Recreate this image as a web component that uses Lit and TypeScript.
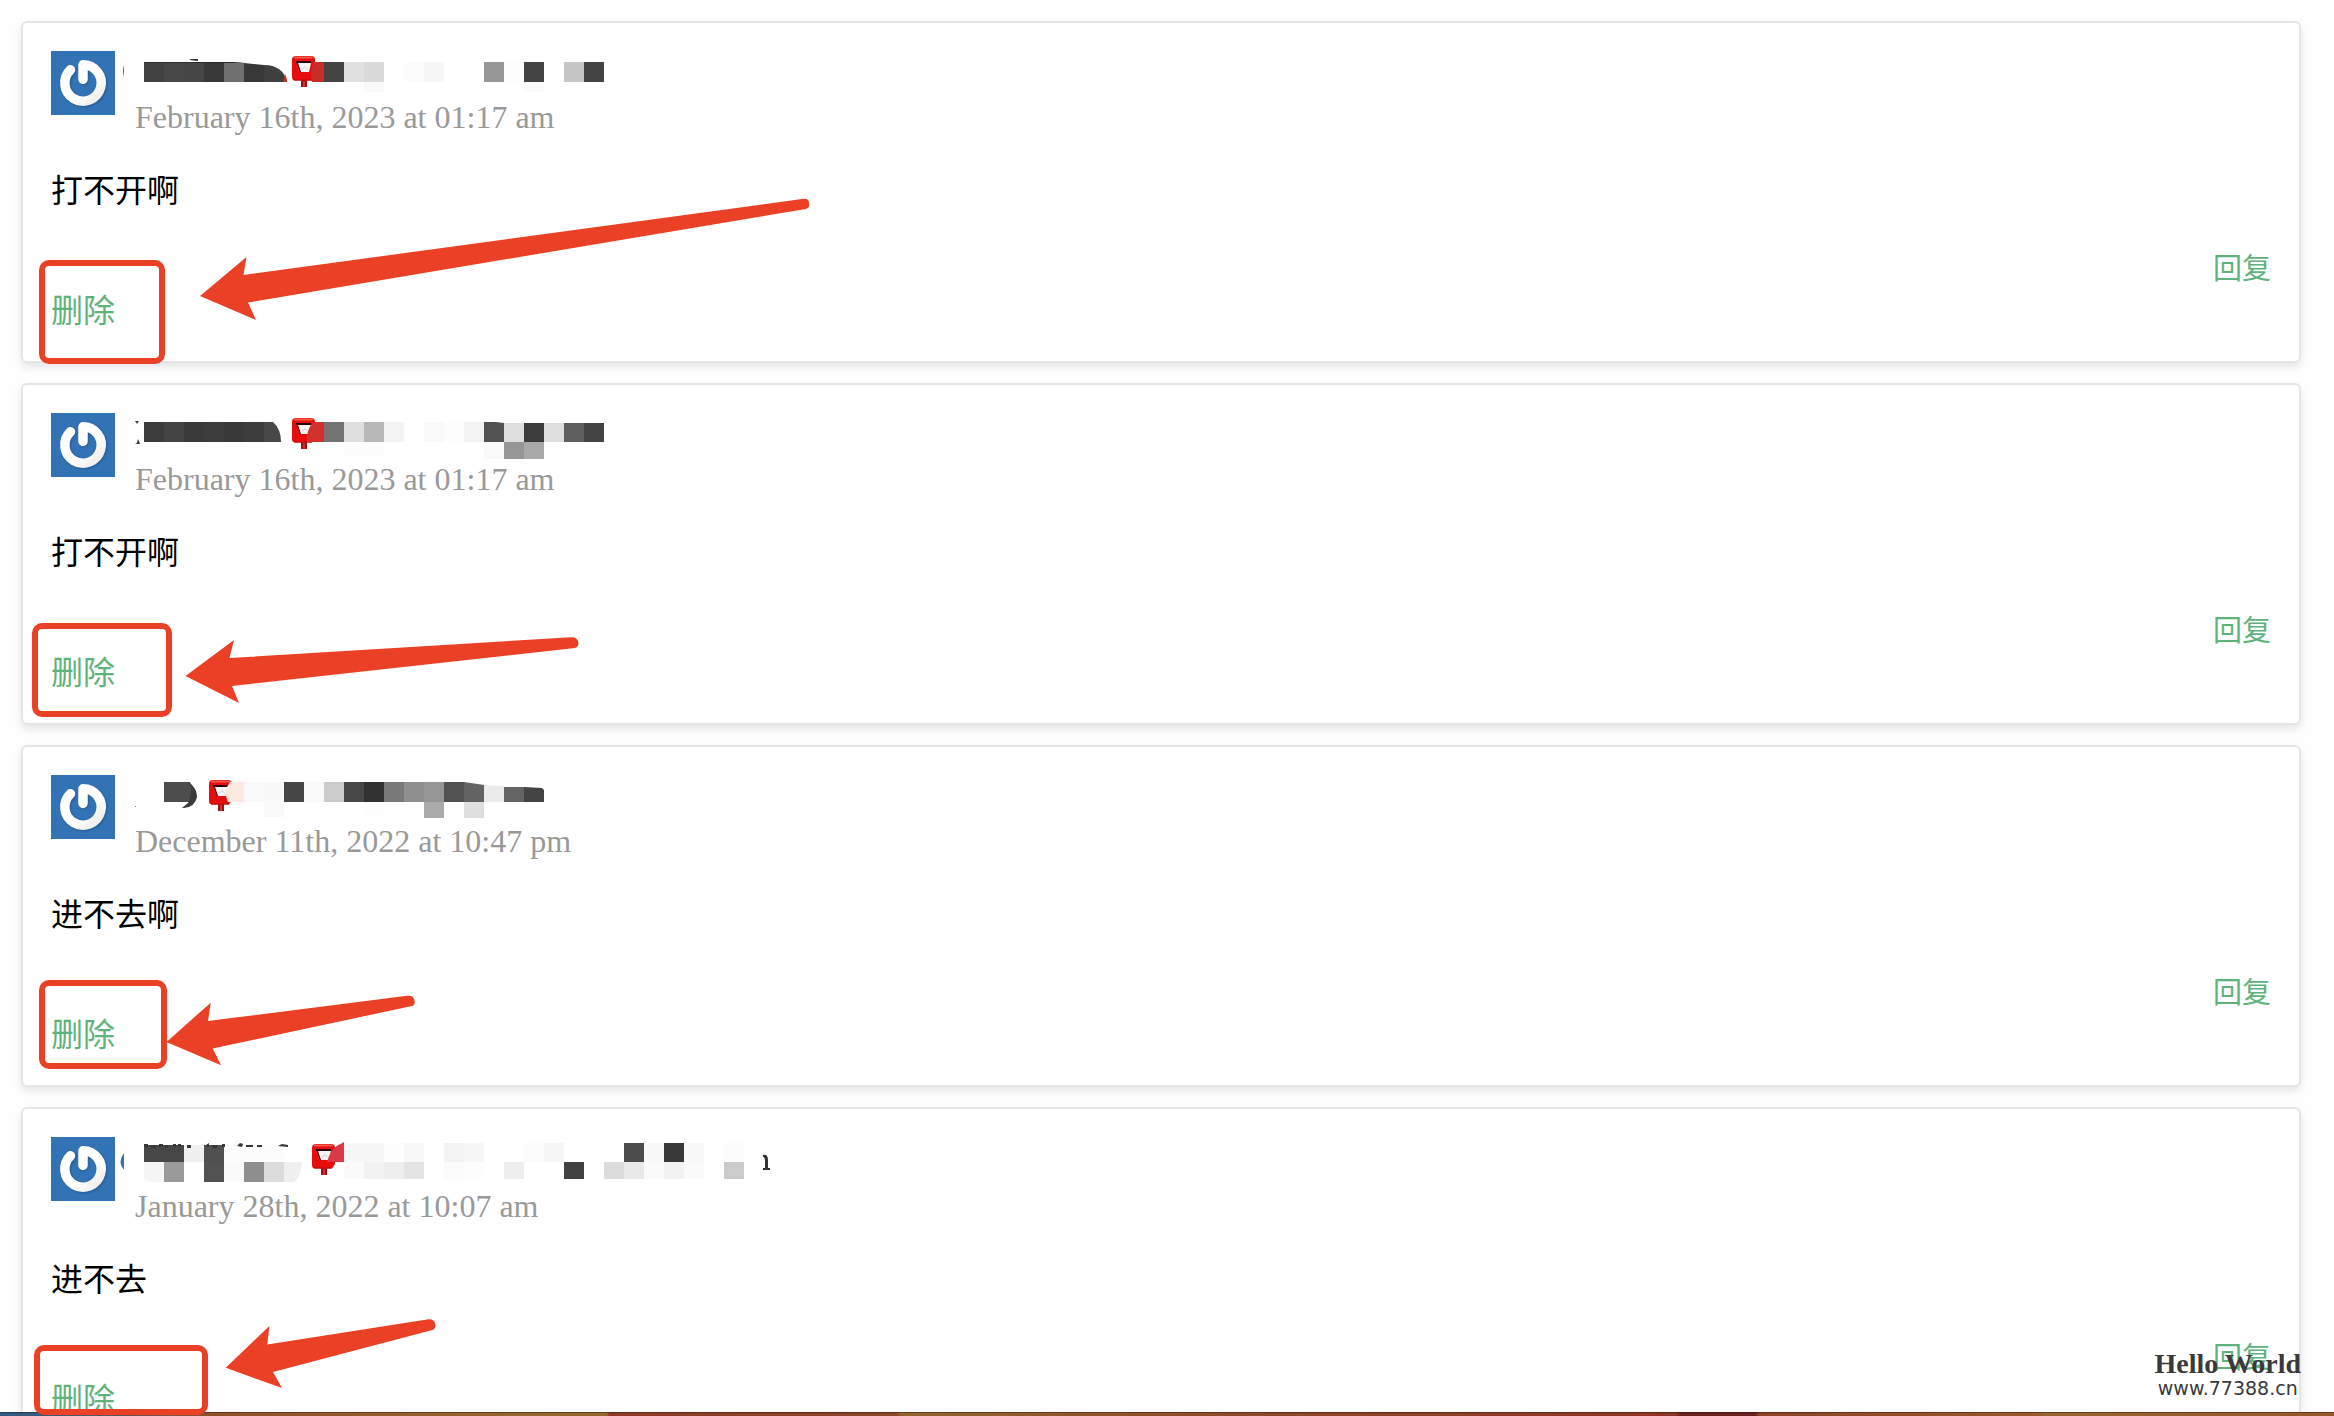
import { LitElement, html, svg, css } from "lit";
import { customElement, property } from "lit/decorators.js";

/** [x, y, width, height, fill] */
type Tile = [number, number, number, number, string];

interface Comment {
  tall?: boolean;
  tiles: Tile[];
  marks: [string, string][];
  mailbox: [number, number];
  overlay: [string, string][];
  date: string;
  body: string;
}

const row = (x: number, y: number, h: number, fills: string): Tile[] =>
  fills
    .split(" ")
    .map((f, i): Tile => [x + i * 20, y, 20, h, f === "-" ? "none" : "#" + f])
    .filter((t) => t[4] !== "none");

const COMMENTS: Comment[] = [
  {
    tiles: [
      ...row(144, 11, 20, "424242 484848 464646 383838"),
      ...row(324, 11, 20, "444444 e0e0e0 dadada - fcfcfc f7f7f7 - fefefe 979797 fdfdfd 444444 - c5c5c5 444444"),
      ...row(364, 31, 10, "fafafa"),
      ...row(524, 31, 10, "fbfbfb"),
    ],
    marks: [
      ["M224 11H232L244 12V31H224Z", "#707070"],
      ["M244 12L264 14V31H244Z", "#383838"],
      ["M264 14Q283 14 287 31H264Z", "#404040"],
      ["M283 31L285 23Q287 27 287 31Z", "#c92d27"],
      ["M144 11H232L246 12L144 12Z", "#2c2c2c"],
      ["M189 9L191 8H198V10Z", "#333"],
      ["M124 14Q122 20 124 26Z", "#3273b5"],
    ],
    mailbox: [292, 5],
    overlay: [["M324 11V31H312Q309 20 314 11Z", "#c92d27"]],
    date: "February 16th, 2023 at 01:17 am",
    body: "打不开啊",
  },
  {
    tiles: [
      ...row(144, 9, 20, "3c3c3c 444444 3a3a3a 3d3d3d 393939 3d3d3d"),
      ...row(324, 9, 20, "737373 dedede b8b8b8 f4f4f4 - f9f9f9 fdfdfd f3f3f3"),
      ...row(504, 10, 19, "dedede 3c3c3c dedede 5f5f5f 444444"),
      ...row(344, 29, 14, "fcfcfc fcfcfc"),
      ...row(484, 29, 17, "f9f9f9 969696 a8a8a8"),
    ],
    marks: [
      ["M264 9H273Q281 16 281 29H264Z", "#484848"],
      ["M484 9H496L504 10V29H484Z", "#525252"],
      ["M135 8H139L137 11Z", "#444"],
      ["M135 31L137 30L138 26L140 31Z", "#333"],
    ],
    mailbox: [292, 5],
    overlay: [["M324 9V29H307Q306 18 313 9Z", "#d3302c"]],
    date: "February 16th, 2023 at 01:17 am",
    body: "打不开啊",
  },
  {
    tiles: [
      ...row(144, 7, 20, "fefefe"),
      ...row(244, 7, 20, "f9f9f9 f8f8f8 464646 fafafa cbcbcb 474747 313131 797979 8f8f8f 969696 525252"),
      ...row(504, 12, 15, "646464"),
      ...row(264, 27, 15, "f9f9f9"),
      ...row(364, 27, 15, "fdfdfd"),
      ...row(424, 27, 16, "ababab"),
      ...row(464, 27, 16, "dfdfdf"),
    ],
    marks: [
      ["M164 7H190Q194 15 195 27H164Z", "#4d4d4d"],
      ["M190 8Q197 14 197 22Q195 32 184 33H182L188 28Q193 18 190 8Z", "#3b3b3b"],
      ["M464 7L484 10V27H464Z", "#636363"],
      ["M484 10L504 11V27H484Z", "#ebebeb"],
      ["M524 12L542 13L544 15V27H524Z", "#444"],
      ["M135 31h1v1h-1z", "#777"],
    ],
    mailbox: [209, 5],
    overlay: [["M244 7V27H228Q223 16 230 7Z", "#ffe8df"]],
    date: "December 11th, 2022 at 10:47 pm",
    body: "进不去啊",
  },
  {
    tall: true,
    tiles: [
      ...row(144, 8, 17, "474747 474747 f0f0f0 505050 fcfcfc fcfcfc fcfcfc"),
      ...row(344, 6, 19, "f7f7f7 f7f7f7 fdfdfd f8f8f8 - f3f3f3 f7f7f7 - - fcfcfc f6f6f6 - - - 4c4c4c f8f8f8 393939 f8f8f8 - fcfcfc"),
      ...row(164, 25, 20, "9a9a9a - 525252 fafafa 8e8e8e dcdcdc"),
      ...row(344, 25, 17, "fafafa f2f2f2 eeeeee e4e4e4 - fcfcfc fdfdfd - eeeeee - - 424242 - dcdcdc e9e9e9 fafafa f2f2f2 fafafa - cbcbcb"),
    ],
    marks: [
      ["M144 25H164V45H152Q144 44 144 40Z", "#f5f5f5"],
      ["M284 25H302Q301 40 294 45H284Z", "#f0f0f0"],
      ["M144 7h4v3h-4zM151 8h5v3h-5zM159 7h4v3h-4zM165 8h3v3h-3zM173 7h3v3h-3zM178 7h3v3h-3zM187 8h4v3h-4zM206 8l3-2v4h-3zM212 8h5v3h-5zM222 7h3v3h-3zM237 9l3-3 3 1-1 3zM246 8h7v2h-7zM257 8h5v2h-5zM278 9l4-2 6 1v2z", "#383838"],
      ["M124 16Q117 25 124 33Z", "#3273b5"],
      ["M763 18Q768 17 768 23V31H770V33H763V31H765V24Q765 20 763 20Z", "#333"],
    ],
    mailbox: [312, 7],
    overlay: [["M344 6V25H327Q330 13 338 8Q341 7 344 5Z", "#d93a45"]],
    date: "January 28th, 2022 at 10:07 am",
    body: "进不去",
  },
];

@customElement("user-avatar")
class UserAvatar extends LitElement {
  static styles = css`
    :host { display: block; flex: none; width: 64px; height: 64px; }
    .picture { display: block; width: 100%; height: 100%; }
  `;
  render() {
    return html`<svg class="picture" viewBox="0 0 64 64" aria-hidden="true">
      <defs>
        <filter id="s" x="-20%" y="-20%" width="140%" height="140%" color-interpolation-filters="sRGB">
          <feGaussianBlur in="SourceAlpha" stdDeviation="1" result="b" />
          <feOffset in="b" dx="1" dy="1" result="o" />
          <feFlood flood-color="#123a66" flood-opacity=".45" />
          <feComposite in2="o" operator="in" result="c" />
          <feMerge><feMergeNode in="c" /><feMergeNode in="SourceGraphic" /></feMerge>
        </filter>
        <linearGradient id="g" x1="0" y1="0" x2="1" y2="1">
          <stop offset=".6" stop-color="#fff" /><stop offset="1" stop-color="#ecebe9" />
        </linearGradient>
      </defs>
      <rect width="64" height="64" fill="#3273b5" />
      <path
        d="M19.500 18.800A18.200 18.200 0 1 0 32 13.800V28.500"
        fill="none" stroke="url(#g)" stroke-width="9.5"
        stroke-linecap="round" stroke-linejoin="round" filter="url(#s)"
      />
    </svg>`;
  }
}

@customElement("comment-card")
class CommentCard extends LitElement {
  @property({ attribute: false }) comment!: Comment;
  static styles = css`
    :host {
      display: block;
      flex: none;
      box-sizing: border-box;
      padding: 28px 28px 32px;
      border: 2px solid #e5e5e5;
      border-radius: 6px;
      background: #fff;
      box-shadow: 0 4px 8px rgba(0, 0, 0, 0.1);
      font-family: Georgia, Gelasio, "Liberation Serif", "Noto Sans CJK SC", serif;
    }
    .head { display: flex; gap: 20px; align-items: flex-start; }
    .meta { display: flex; flex-direction: column; min-width: 0; }
    .name { display: block; width: 640px; height: 46px; overflow: visible; }
    .name.tall { height: 49px; }
    .date {
      font-family: "Liberation Serif", serif;
      font-size: 32px;
      line-height: 40px;
      color: #999;
      white-space: nowrap;
    }
    .body {
      margin: 30px 0 36px;
      font-family: "Noto Sans CJK SC", sans-serif;
      font-size: 32px;
      line-height: 42px;
      color: #000;
    }
    .actions { display: flex; flex-direction: column; align-items: flex-start; }
    .link {
      font-family: "Noto Sans CJK SC", sans-serif;
      font-size: 32px;
      line-height: 42px;
      color: #5fb27a;
      text-decoration: none;
    }
    .reply { align-self: flex-end; font-size: 29px; }
  `;
  render() {
    const c = this.comment;
    const [mx, my] = c.mailbox;
    return html`
      <header class="head">
        <user-avatar></user-avatar>
        <div class="meta">
          <svg class="name ${c.tall ? "tall" : ""}" viewBox="135 0 640 ${c.tall ? 49 : 46}" aria-hidden="true">
            <g shape-rendering="crispEdges">
              ${c.tiles.map(([x, y, w, h, f]) => svg`<rect x=${x} y=${y} width=${w} height=${h} fill=${f} />`)}
            </g>
            ${c.marks.map(([d, f]) => svg`<path d=${d} fill=${f} />`)}
            <g transform="translate(${mx} ${my})">
              <rect x="9" y="22" width="6" height="9" fill="#a01010" />
              <path d="M12 25v6" stroke="#cf3030" stroke-width="2" />
              <path d="M4 0H19Q23 0 23 4V20L20 24.500H3Q0 24.500 0 21V4Q0 0 4 0Z" fill="#e60d0d" />
              <path d="M3 1.500H20" stroke="#f45a4a" stroke-width="2" stroke-linecap="round" />
              <path d="M4 5H19V7H4Z" fill="#300" />
              <path d="M5.500 7H19L17 16H8.500Z" fill="#f5f5f5" />
              <path d="M5.500 7L8.500 16" stroke="#400" />
              <path d="M10 13.500L13 10.500L16 13.500" fill="none" stroke="#ccc" />
              <path d="M2 24H20" stroke="#b80a0a" />
            </g>
            ${c.overlay.map(([d, f]) => svg`<path d=${d} fill=${f} />`)}
          </svg>
          <time class="date">${c.date}</time>
        </div>
      </header>
      <p class="body">${c.body}</p>
      <nav class="actions">
        <a class="link reply" href="#reply">回复</a>
        <a class="link" href="#delete">删除</a>
      </nav>
    `;
  }
}

@customElement("app-root")
class AppRoot extends LitElement {
  static styles = css`
    :host {
      display: block;
      position: relative;
      height: 100vh;
      overflow: hidden;
      background: #fefefe;
    }
    .list {
      display: flex;
      flex-direction: column;
      gap: 20px;
      padding: 21px 33px 0 21px;
    }
    .edge {
      position: absolute;
      inset: auto 0 0 0;
      height: 4px;
      box-shadow: inset 0 1px 0 rgba(40, 20, 10, 0.45);
      background: linear-gradient(
        90deg,
        #2f5a87 0, #3b5a78 2%, #8f4f2b 9%, #94602d 18%, #94692f 26%,
        #8f3a27 26.100%, #8c4529 38.400%, #8f652f 38.600%, #8f4a2a 52%, #8e3326 71.800%,
        #6a2020 72%, #6a2020 75.200%, #8e4328 75.400%, #99582c 87.300%, #97662f 87.600%, #96562b 100%
      );
    }
    .notes {
      position: absolute;
      inset: 0;
      width: 100%;
      height: 100%;
      pointer-events: none;
    }
    .stamp {
      position: absolute;
      right: 33px;
      bottom: 18px;
      display: flex;
      flex-direction: column;
      align-items: center;
      color: #3a3a3a;
      white-space: nowrap;
    }
    .title { font: bold 28px/28px "Liberation Serif", serif; }
    .site { font: 19px/20px "DejaVu Sans", sans-serif; }
  `;
  render() {
    return html`
      <main class="list">
        ${COMMENTS.map((c) => html`<comment-card .comment=${c}></comment-card>`)}
      </main>
      <div class="edge"></div>
      <svg class="notes" aria-hidden="true">
        <g fill="none" stroke="#ea4025" stroke-width="6">
          <rect x="42" y="263" width="120" height="98" rx="7" />
          <rect x="35" y="626" width="134" height="88" rx="7" />
          <rect x="42" y="983" width="122" height="83" rx="7" />
          <rect x="37" y="1348" width="168" height="64" rx="7" />
        </g>
        <g fill="#ea4025">
          <path d="M200 296L246.500 257L243.500 275L802 199Q809 198 809 203Q810 208 806 209L248 302.500L256 320Z" />
          <path d="M185.500 676L234 640L229.500 658L571 637.300Q578 637 578.500 643Q578.500 647 575 648L232 686L239 703Z" />
          <path d="M166.500 1042L210.700 1002.700L208 1021L407 995.700Q414 995 414.700 1001Q415 1005 412 1006L212.700 1048.500L221 1065.300Z" />
          <path d="M225.700 1367.700L269.400 1326L267.300 1344.500L428.500 1319.300Q435 1319 435.500 1325Q435.500 1329 432.500 1330L273 1372L282 1388Z" />
        </g>
      </svg>
      <div class="stamp">
        <span class="title">Hello World</span>
        <span class="site">www.77388.cn</span>
      </div>
    `;
  }
}
